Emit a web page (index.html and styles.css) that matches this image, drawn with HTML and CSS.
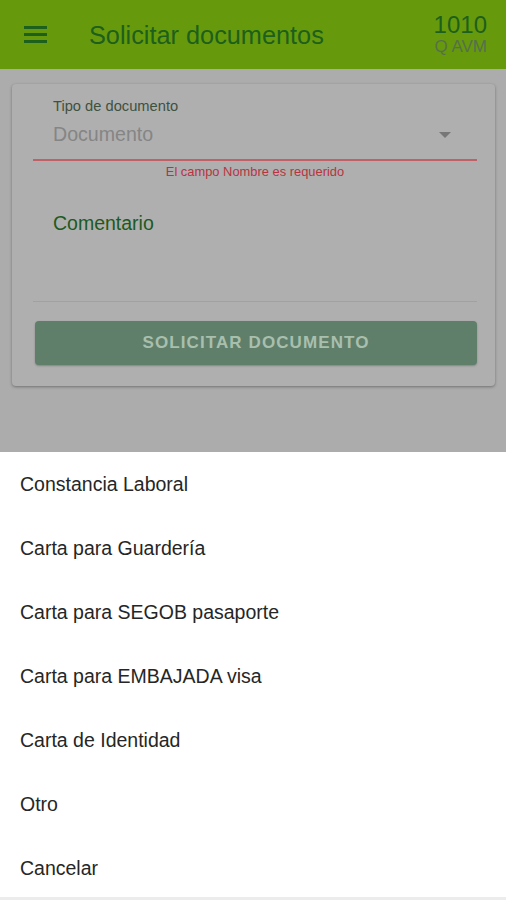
FILE: index.html
```html
<!DOCTYPE html>
<html lang="es">
<head>
  <meta charset="UTF-8" />
  <meta name="viewport" content="width=device-width, initial-scale=1.0"/>
  <title>Solicitar documentos</title>
  <link rel="stylesheet" href="styles.css">
</head>
<body>

  <header class="appbar">
    <svg class="menu-icon" width="23" height="18" viewBox="0 0 23 18">
      <rect x="0" y="1" width="23" height="3" fill="#1d5f1c"/>
      <rect x="0" y="8" width="23" height="3" fill="#1d5f1c"/>
      <rect x="0" y="15" width="23" height="3" fill="#1d5f1c"/>
    </svg>
    <h1 class="appbar-title">Solicitar documentos</h1>
    <div class="user-box">
      <div class="user-num">1010</div>
      <div class="user-code">Q AVM</div>
    </div>
  </header>

  <main class="backdrop">
    <div class="card">
      <div class="field select-field">
        <label class="field-label">Tipo de documento</label>
        <div class="select-row">
          <span class="select-value">Documento</span>
          <span class="caret"></span>
        </div>
      </div>
      <div class="field-error">El campo Nombre es requerido</div>

      <div class="field text-field">
        <span class="text-label">Comentario</span>
      </div>

      <button class="submit-btn" disabled>SOLICITAR DOCUMENTO</button>
    </div>
  </main>

  <ul class="sheet">
    <li>Constancia Laboral</li>
    <li>Carta para Guardería</li>
    <li>Carta para SEGOB pasaporte</li>
    <li>Carta para EMBAJADA visa</li>
    <li>Carta de Identidad</li>
    <li>Otro</li>
    <li>Cancelar</li>
  </ul>

</body>
</html>
```

FILE: styles.css
```css
* { box-sizing: border-box; }
body {
  margin: 0;
  padding: 0;
  font-family: 'Liberation Sans', Arial, sans-serif;
  display: flex;
  flex-direction: column;
  height: 900px;
  overflow: hidden;
  background: #acacac;
}
.appbar {
  height: 69px;
  flex: none;
  background: #669a0c;
  display: flex;
  align-items: center;
  padding: 0 19px 0 24px;
}
.menu-icon { flex: none; margin-top: -1px; }
.appbar-title {
  margin: 1px 0 0 42px;
  flex: 1;
  font-size: 25.3px;
  font-weight: 400;
  color: #1d5f1c;
}
.user-box {
  text-align: right;
}
.user-num {
  font-size: 24px;
  line-height: 24px;
  color: #1d5f1c;
}
.user-code {
  font-size: 17px;
  line-height: 20px;
  color: #55704a;
}
.backdrop {
  flex: 1;
  padding: 15px 11px 0 12px;
}
.card {
  background: #afafaf;
  border-radius: 4px;
  box-shadow: 0 1px 3px rgba(0,0,0,0.35);
  padding: 14px 18px 21px 21px;
}
.select-field {
  padding: 0 22px 0 20px;
  border-bottom: 2px solid #c06168;
  height: 63px;
}
.field-label {
  display: block;
  font-size: 14.7px;
  color: #3f513f;
}
.select-row {
  display: flex;
  align-items: center;
  justify-content: space-between;
  margin-top: 9px;
}
.select-value {
  font-size: 19.6px;
  color: #858585;
}
.caret {
  width: 0;
  height: 0;
  border-left: 6px solid transparent;
  border-right: 6px solid transparent;
  border-top: 6px solid #777;
  margin-right: 4px;
}
.field-error {
  text-align: center;
  font-size: 12.9px;
  color: #b8343f;
  margin-top: 3px;
}
.text-field {
  height: 123px;
  padding: 33px 20px 0;
  border-bottom: 1px solid #a1a1a1;
}
.text-label {
  font-size: 19.5px;
  color: #1d5a20;
}
.submit-btn {
  display: block;
  width: calc(100% - 2px);
  margin: 19px 0 0 2px;
  height: 44px;
  border: none;
  border-radius: 4px;
  background: #5f7f6b;
  color: #a9bfae;
  font-family: inherit;
  font-size: 17px;
  font-weight: 700;
  letter-spacing: 1.1px;
  box-shadow: 0 1px 2px rgba(0,0,0,0.25);
}
.sheet {
  flex: none;
  list-style: none;
  margin: 0;
  padding: 0;
  background: #fff;
  box-shadow: inset 0 -3px 0 #ececec;
}
.sheet li {
  height: 64px;
  display: flex;
  align-items: center;
  padding-left: 20px;
  font-size: 19.5px;
  color: #262626;
}
```
